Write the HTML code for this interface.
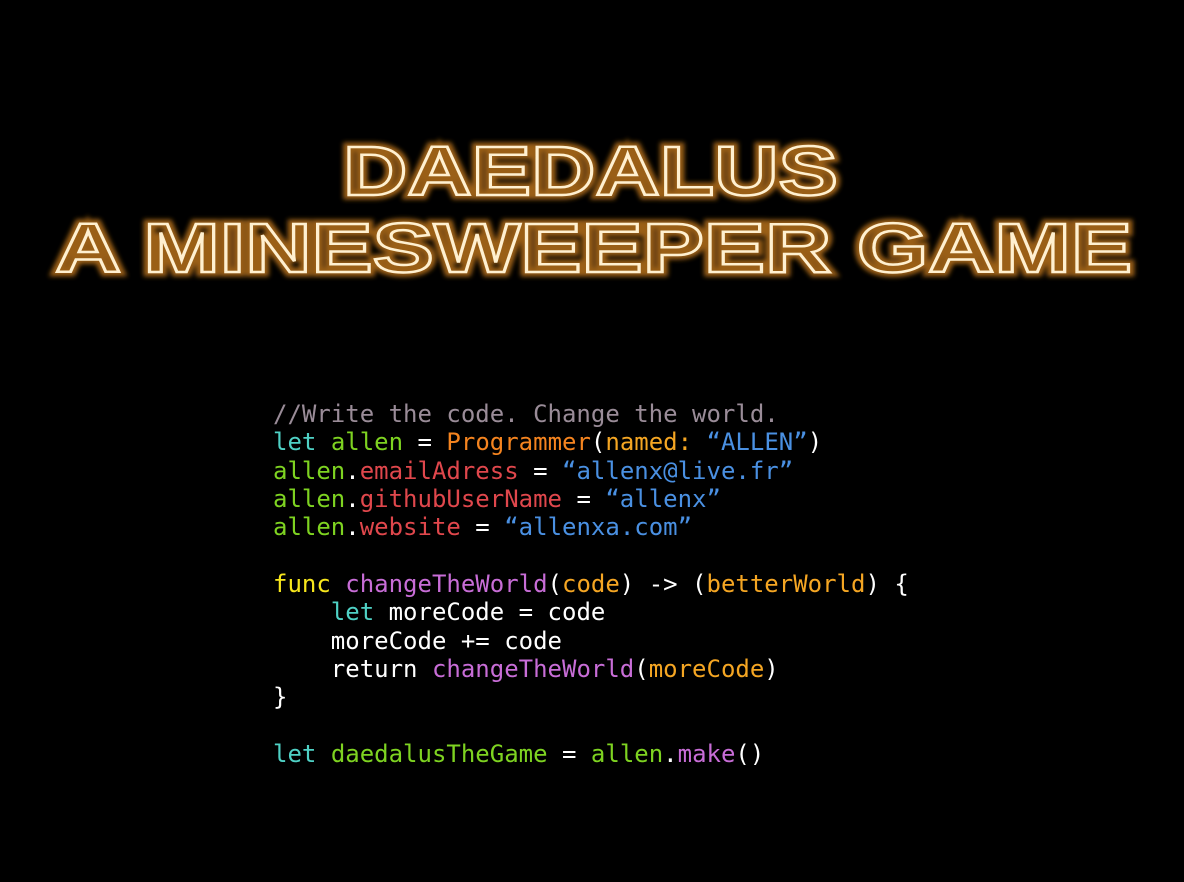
<!DOCTYPE html>
<html><head><meta charset="utf-8"><style>
html,body{margin:0;padding:0;background:#000;width:1184px;height:882px;overflow:hidden}
svg{position:absolute;left:0;top:0}
pre{position:absolute;left:273px;top:400px;margin:0;font-family:"DejaVu Sans Mono","Liberation Mono",monospace;font-size:24px;line-height:28.33px;color:#fff}
.c{color:#9a8c98}.k{color:#4fd1c5}.g{color:#7ed321}.o{color:#f5841f}.b{color:#4a90e2}.r{color:#e0474c}.y{color:#f8e71c}.p{color:#c86dd7}.a{color:#f5a623}
</style></head><body>
<svg width="1184" height="882">
<defs><filter id="gl" x="-10%" y="-30%" width="120%" height="160%"><feGaussianBlur stdDeviation="2.5"/></filter></defs>
<g font-family="Liberation Sans, sans-serif" font-weight="900" font-size="70" fill="none" stroke-linejoin="miter">
<g stroke="#9a5e18" stroke-width="9" filter="url(#gl)">
<text x="343" y="195" textLength="495" lengthAdjust="spacingAndGlyphs">DAEDALUS</text>
<text x="55" y="272" textLength="1077" lengthAdjust="spacingAndGlyphs">A MINESWEEPER GAME</text>
</g>
<g stroke="#fff0d0" stroke-width="2.5">
<text x="343" y="195" textLength="495" lengthAdjust="spacingAndGlyphs">DAEDALUS</text>
<text x="55" y="272" textLength="1077" lengthAdjust="spacingAndGlyphs">A MINESWEEPER GAME</text>
</g>
</g>
</svg>
<pre><span class="c">//Write the code. Change the world.</span>
<span class="k">let</span> <span class="g">allen</span> = <span class="o">Programmer</span>(<span class="a">named:</span> <span class="b">“ALLEN”</span>)
<span class="g">allen</span>.<span class="r">emailAdress</span> = <span class="b">“allenx@live.fr”</span>
<span class="g">allen</span>.<span class="r">githubUserName</span> = <span class="b">“allenx”</span>
<span class="g">allen</span>.<span class="r">website</span> = <span class="b">“allenxa.com”</span>

<span class="y">func</span> <span class="p">changeTheWorld</span>(<span class="a">code</span>) -&gt; (<span class="a">betterWorld</span>) {
    <span class="k">let</span> moreCode = code
    moreCode += code
    return <span class="p">changeTheWorld</span>(<span class="a">moreCode</span>)
}

<span class="k">let</span> <span class="g">daedalusTheGame</span> = <span class="g">allen</span>.<span class="p">make</span>()</pre>
</body></html>
